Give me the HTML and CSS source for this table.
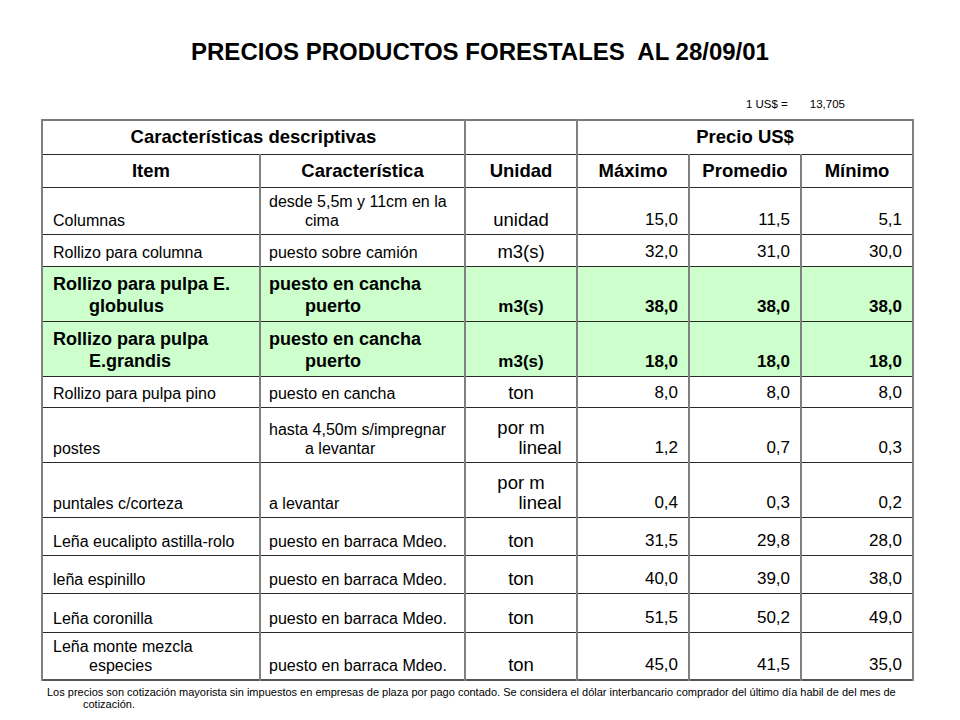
FILE: index.html
```html
<!DOCTYPE html>
<html lang="es">
<head>
<meta charset="utf-8">
<title>Precios productos forestales</title>
<link rel="stylesheet" href="styles.css">
</head>
<body>
<div class="page">
  <h1 class="title">PRECIOS PRODUCTOS FORESTALES&nbsp; AL 28/09/01</h1>
  <div class="rate"><span>1 US$ =</span><span>13,705</span></div>
  <table class="prices">
    <colgroup>
      <col class="c-item"><col class="c-car"><col class="c-num"><col class="c-num"><col class="c-num"><col class="c-num">
    </colgroup>
    <thead>
      <tr class="h1row">
        <th colspan="2">Características descriptivas</th>
        <th></th>
        <th colspan="3">Precio US$</th>
      </tr>
      <tr class="h2row">
        <th>Item</th><th>Característica</th><th>Unidad</th><th>Máximo</th><th>Promedio</th><th>Mínimo</th>
      </tr>
    </thead>
    <tbody>
      <tr class="r47">
        <td class="txt">Columnas</td><td class="txt">desde 5,5m y 11cm en la cima</td>
        <td class="unit">unidad</td><td class="num">15,0</td><td class="num">11,5</td><td class="num">5,1</td>
      </tr>
      <tr class="r32">
        <td class="txt">Rollizo para columna</td><td class="txt">puesto sobre camión</td>
        <td class="unit">m3(s)</td><td class="num">32,0</td><td class="num">31,0</td><td class="num">30,0</td>
      </tr>
      <tr class="r55 hl">
        <td class="txt">Rollizo para pulpa E. globulus</td><td class="txt">puesto en cancha puerto</td>
        <td class="unit">m3(s)</td><td class="num">38,0</td><td class="num">38,0</td><td class="num">38,0</td>
      </tr>
      <tr class="r55 hl">
        <td class="txt">Rollizo para pulpa E.grandis</td><td class="txt">puesto en cancha puerto</td>
        <td class="unit">m3(s)</td><td class="num">18,0</td><td class="num">18,0</td><td class="num">18,0</td>
      </tr>
      <tr class="r31">
        <td class="txt">Rollizo para pulpa pino</td><td class="txt">puesto en cancha</td>
        <td class="unit">ton</td><td class="num">8,0</td><td class="num">8,0</td><td class="num">8,0</td>
      </tr>
      <tr class="r55">
        <td class="txt">postes</td><td class="txt">hasta 4,50m s/impregnar a levantar</td>
        <td class="unit"><span class="l1">por m</span><span class="l2">lineal</span></td><td class="num">1,2</td><td class="num">0,7</td><td class="num">0,3</td>
      </tr>
      <tr class="r55">
        <td class="txt">puntales c/corteza</td><td class="txt">a levantar</td>
        <td class="unit"><span class="l1">por m</span><span class="l2">lineal</span></td><td class="num">0,4</td><td class="num">0,3</td><td class="num">0,2</td>
      </tr>
      <tr class="r38">
        <td class="txt">Leña eucalipto astilla-rolo</td><td class="txt">puesto en barraca Mdeo.</td>
        <td class="unit">ton</td><td class="num">31,5</td><td class="num">29,8</td><td class="num">28,0</td>
      </tr>
      <tr class="r38">
        <td class="txt">leña espinillo</td><td class="txt">puesto en barraca Mdeo.</td>
        <td class="unit">ton</td><td class="num">40,0</td><td class="num">39,0</td><td class="num">38,0</td>
      </tr>
      <tr class="r39">
        <td class="txt">Leña coronilla</td><td class="txt">puesto en barraca Mdeo.</td>
        <td class="unit">ton</td><td class="num">51,5</td><td class="num">50,2</td><td class="num">49,0</td>
      </tr>
      <tr class="r48">
        <td class="txt">Leña monte mezcla especies</td><td class="txt">puesto en barraca Mdeo.</td>
        <td class="unit">ton</td><td class="num">45,0</td><td class="num">41,5</td><td class="num">35,0</td>
      </tr>
    </tbody>
  </table>
  <p class="note">Los precios son cotización mayorista sin impuestos en empresas de plaza por pago contado. Se considera el dólar interbancario comprador del último día habil de del mes de cotización.</p>
</div>
</body>
</html>
```

FILE: styles.css
```css
html, body {
  margin: 0;
  padding: 0;
  background: #ffffff;
}

body {
  font-family: "Liberation Sans", Arial, sans-serif;
  color: #000000;
}

.page {
  width: 960px;
  height: 720px;
  overflow: hidden;
}

.title {
  margin: 38px 0 0 0;
  font-size: 24px;
  line-height: 28px;
  font-weight: bold;
  text-align: center;
  white-space: pre;
}

.rate {
  display: flex;
  justify-content: flex-end;
  gap: 22px;
  margin: 31px 115px 0 0;
  font-size: 11.5px;
  line-height: 14px;
}

.prices {
  margin: 8px 0 0 41px;
  width: 873px;
  table-layout: fixed;
  border-collapse: collapse;
  border-top: 2px solid #7a7a7a;
  border-bottom: 2px solid #555555;
}

.c-item { width: 218px; }
.c-car { width: 205px; }
.c-num { width: 112px; }

.prices th,
.prices td {
  border-left: 2px solid #808080;
  border-right: 2px solid #808080;
  border-top: 1px solid #2a2a2a;
  border-bottom: 1px solid #2a2a2a;
  padding: 0;
}

.prices th {
  font-size: 18.5px;
  font-weight: bold;
  text-align: center;
  vertical-align: middle;
  line-height: 22px;
}

.h1row { height: 34px; }
.h2row { height: 33px; }
.r31 { height: 31px; }
.r32 { height: 32px; }
.r38 { height: 38px; }
.r39 { height: 39px; }
.r47 { height: 47px; }
.r48 { height: 48px; }
.r55 { height: 55px; }

.prices td {
  vertical-align: bottom;
  padding-bottom: 4px;
}

.prices td.txt {
  font-size: 16px;
  line-height: 19px;
  text-align: left;
  padding-left: 44px;
  padding-right: 12px;
  text-indent: -36px;
}

.prices td.txt:first-child {
  padding-left: 46px;
  padding-right: 4px;
}

.prices td.unit {
  font-size: 18.5px;
  line-height: 20px;
  text-align: center;
}

.unit .l1,
.unit .l2 {
  display: block;
  text-indent: 0;
}

.unit .l2 {
  padding-left: 38px;
}

.prices td.num {
  font-size: 17px;
  line-height: 20px;
  text-align: right;
  padding-right: 10px;
}

.prices .hl td {
  background: #ccffcc;
  font-weight: bold;
}

.prices .hl td.txt {
  font-size: 18px;
  line-height: 22px;
}

.prices .hl td.unit {
  font-size: 17px;
}

.note {
  margin: 5px 40px 0 47px;
  padding-left: 36px;
  text-indent: -36px;
  font-size: 11px;
  line-height: 12px;
}
```
